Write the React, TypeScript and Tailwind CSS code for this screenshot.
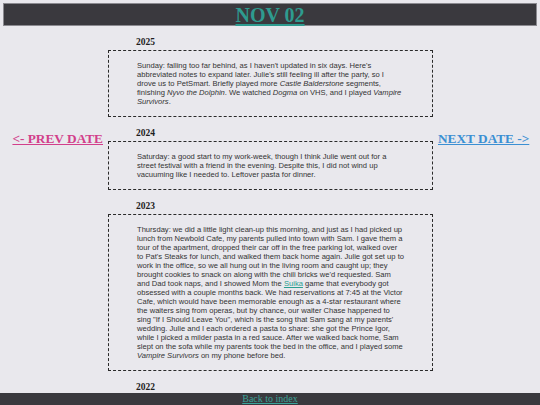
import React from "react";

const serif = { fontFamily: '"Liberation Serif", "Times New Roman", serif' };
const sans = { fontFamily: '"Liberation Sans", Arial, sans-serif' };

function Entry({ year, children }: { year: string; children?: React.ReactNode }) {
  return (
    <section>
      <h3
        className="mt-[10px] h-[12px] pl-[28px] text-[9.5px] font-bold leading-[12px] text-[#1e1e1e]"
        style={serif}
      >
        {year}
      </h3>
      {children && (
        <div
          className="mt-[2px] border border-dashed border-[#2a2a2a] px-[28px] py-[10px] text-[7.6px] leading-[9px] text-[#333]"
          style={sans}
        >
          <p>{children}</p>
        </div>
      )}
    </section>
  );
}

export default function App() {
  return (
    <div className="relative min-h-[405px] bg-[#e9e8ed] pt-[3px]">
      <header className="mx-[3px] flex h-[23px] items-center justify-center border border-[#8b8a90] bg-[#3a393e]">
        <a
          href="#"
          className="text-[20px] font-bold leading-[20px] text-[#2e9b8f] underline decoration-[2px] underline-offset-[2px]"
          style={serif}
        >
          NOV 02
        </a>
      </header>

      <main className="flex">
        <nav className="w-[108px] shrink-0 pr-[5px] pt-[99px] text-right">
          <a
            href="#"
            className="text-[13.3px] font-bold leading-[15px] text-[#d23f8b] underline"
            style={serif}
          >
            &lt;- PREV DATE
          </a>
        </nav>

        <div className="w-[325px] shrink-0">
          <Entry year="2025">
            Sunday: falling too far behind, as I haven't updated in six days. Here's abbreviated
            notes to expand later. Julie's still feeling ill after the party, so I drove us to
            PetSmart. Briefly played more <i>Castle Balderstone</i> segments, finishing{" "}
            <i>Nyvo the Dolphin</i>. We watched <i>Dogma</i> on VHS, and I played{" "}
            <i>Vampire Survivors</i>.
          </Entry>
          <Entry year="2024">
            Saturday: a good start to my work-week, though I think Julie went out for a street
            festival with a friend in the evening. Despite this, I did not wind up vacuuming like I
            needed to. Leftover pasta for dinner.
          </Entry>
          <Entry year="2023">
            Thursday: we did a little light clean-up this morning, and just as I had picked up
            lunch from Newbold Cafe, my parents pulled into town with Sam. I gave them a tour of the
            apartment, dropped their car off in the free parking lot, walked over to Pat's Steaks
            for lunch, and walked them back home again. Julie got set up to work in the office, so
            we all hung out in the living room and caught up; they brought cookies to snack on
            along with the chili bricks we'd requested. Sam and Dad took naps, and I showed Mom the{" "}
            <a href="#" className="text-[#2a9e90] underline">
              Suika
            </a>{" "}
            game that everybody got obsessed with a couple months back. We had reservations at
            7:45 at the Victor Cafe, which would have been memorable enough as a 4-star restaurant
            where the waiters sing from operas, but by chance, our waiter Chase happened to sing
            "If I Should Leave You", which is the song that Sam sang at my parents' wedding. Julie
            and I each ordered a pasta to share: she got the Prince Igor, while I picked a milder
            pasta in a red sauce. After we walked back home, Sam slept on the sofa while my parents
            took the bed in the office, and I played some <i>Vampire Survivors</i> on my phone
            before bed.
          </Entry>
          <Entry year="2022" />
        </div>

        <nav className="flex-1 pl-[5px] pt-[99px] text-left">
          <a
            href="#"
            className="text-[13.3px] font-bold leading-[15px] text-[#3b8fd3] underline"
            style={serif}
          >
            NEXT DATE -&gt;
          </a>
        </nav>
      </main>

      <footer className="fixed bottom-0 left-0 right-0 flex h-[12px] items-center justify-center bg-[#3a393e]">
        <a href="#" className="text-[10px] leading-[12px] text-[#3aa399] underline" style={serif}>
          Back to index
        </a>
      </footer>
    </div>
  );
}
